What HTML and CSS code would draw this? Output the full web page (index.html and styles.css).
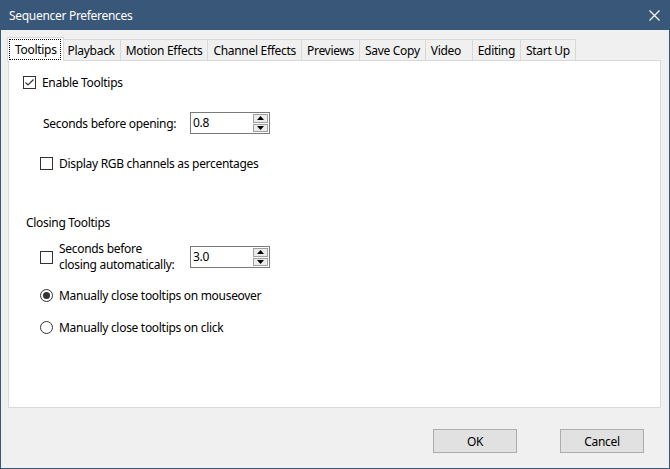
FILE: index.html
```html
<!DOCTYPE html>
<html lang="en">
<head>
  <meta charset="UTF-8" />
  <title>Sequencer Preferences</title>
  <link rel="stylesheet" href="styles.css">
</head>
<body>
  <div class="window">
    <div class="titlebar">
      <span class="title">Sequencer Preferences</span>
      <svg class="close" width="11" height="11" viewBox="0 0 11 11">
        <path d="M0.5 0.5 L10.5 10.5 M10.5 0.5 L0.5 10.5" stroke="#fff" stroke-width="1.1" fill="none"/>
      </svg>
    </div>

    <div class="tabs">
      <div class="tab active"><span class="focus">Tooltips</span></div>
      <div class="tab">Playback</div>
      <div class="tab">Motion Effects</div>
      <div class="tab">Channel Effects</div>
      <div class="tab">Previews</div>
      <div class="tab">Save Copy</div>
      <div class="tab">Video</div>
      <div class="tab">Editing</div>
      <div class="tab">Start Up</div>
    </div>

    <div class="panel">
      <div class="row row-enable">
        <span class="check checked">
          <svg width="11" height="11" viewBox="0 0 11 11"><path d="M1.5 5.5 L4 8 L9.5 2.5" stroke="#333" stroke-width="1.2" fill="none"/></svg>
        </span>
        <span class="label">Enable Tooltips</span>
      </div>

      <div class="row row-open">
        <span class="field-label">Seconds before opening:</span>
        <div class="spin">
          <span class="spin-value">0.8</span>
          <div class="spin-btns">
            <span class="spin-btn"><svg width="7" height="4" viewBox="0 0 7 4"><path d="M3.5 0 L7 4 L0 4 Z" fill="#000"/></svg></span>
            <span class="spin-btn"><svg width="7" height="4" viewBox="0 0 7 4"><path d="M0 0 L7 0 L3.5 4 Z" fill="#000"/></svg></span>
          </div>
        </div>
      </div>

      <div class="row row-rgb">
        <span class="check"></span>
        <span class="label">Display RGB channels as percentages</span>
      </div>

      <div class="section">Closing Tooltips</div>

      <div class="row row-close">
        <span class="check"></span>
        <span class="label two-line">Seconds before<br>closing automatically:</span>
        <div class="spin">
          <span class="spin-value">3.0</span>
          <div class="spin-btns">
            <span class="spin-btn"><svg width="7" height="4" viewBox="0 0 7 4"><path d="M3.5 0 L7 4 L0 4 Z" fill="#000"/></svg></span>
            <span class="spin-btn"><svg width="7" height="4" viewBox="0 0 7 4"><path d="M0 0 L7 0 L3.5 4 Z" fill="#000"/></svg></span>
          </div>
        </div>
      </div>

      <div class="row row-radio1">
        <span class="radio selected"></span>
        <span class="label">Manually close tooltips on mouseover</span>
      </div>

      <div class="row row-radio2">
        <span class="radio"></span>
        <span class="label">Manually close tooltips on click</span>
      </div>
    </div>

    <div class="footer">
      <button class="btn">OK</button>
      <button class="btn">Cancel</button>
    </div>
  </div>
</body>
</html>
```

FILE: styles.css
```css
body {
  margin: 0;
  padding: 0;
  font-family: 'Segoe UI', 'Noto Sans', sans-serif;
  font-size: 12px;
  letter-spacing: -0.3px;
  color: #000;
}

.window {
  width: 670px;
  height: 469px;
  box-sizing: border-box;
  border: 1px solid #395779;
  border-top: none;
  background: #f0f0f0;
  display: flex;
  flex-direction: column;
}

.titlebar {
  height: 30px;
  margin: 0 -1px;
  background: #395779;
  color: #fff;
  display: flex;
  align-items: center;
  justify-content: space-between;
  padding: 0 10px 0 9px;
  flex-shrink: 0;
}

.title {
  font-size: 12px;
  margin-top: 1px;
}

.tabs {
  display: flex;
  align-items: flex-end;
  margin: 7px 0 0 7px;
  position: relative;
  z-index: 1;
}

.tab {
  height: 21px;
  box-sizing: border-box;
  min-width: 48px;
  padding: 1px 5px 0 5px;
  border: 1px solid #d9d9d9;
  border-bottom: none;
  margin-left: -1px;
  background: #f0f0f0;
  display: flex;
  align-items: center;
  white-space: nowrap;
}

.tab:first-child {
  margin-left: 0;
}

.tab.active {
  height: 24px;
  margin: 0 -1px -1px -1px;
  padding: 0 3px 1px 2px;
  background: #fff;
  position: relative;
  z-index: 2;
}

.focus {
  outline: 1px dotted #000;
  padding: 1px 3px 1px 5px;
}

.panel {
  margin: 0 8px 0 7px;
  height: 348px;
  box-sizing: border-box;
  background: #fff;
  border: 1px solid #d9d9d9;
  padding-top: 13px;
}

.row {
  display: flex;
  align-items: center;
  height: 16px;
}

.check {
  width: 13px;
  height: 13px;
  box-sizing: border-box;
  border: 1px solid #333;
  background: #fff;
  display: flex;
  align-items: center;
  justify-content: center;
  flex-shrink: 0;
}

.radio {
  width: 13px;
  height: 13px;
  box-sizing: border-box;
  border: 1px solid #333;
  border-radius: 50%;
  background: #fff;
  display: flex;
  align-items: center;
  justify-content: center;
  flex-shrink: 0;
}

.radio.selected::after {
  content: "";
  width: 7px;
  height: 7px;
  border-radius: 50%;
  background: #333;
}

.label {
  margin-left: 6px;
  white-space: nowrap;
}

.two-line {
  line-height: 16px;
  width: 131px;
}

.row-enable {
  padding-left: 14px;
}

.row-open {
  height: 22px;
  margin-top: 22px;
  padding-left: 34px;
}

.field-label {
  width: 147px;
}

.row-rgb {
  margin-top: 21px;
  padding-left: 31px;
}

.section {
  margin-top: 44px;
  padding-left: 17px;
  height: 16px;
  line-height: 16px;
}

.row-close {
  height: 32px;
  margin-top: 10px;
  padding-left: 31px;
}

.row-radio1 {
  margin-top: 14px;
  padding-left: 31px;
}

.row-radio2 {
  margin-top: 16px;
  padding-left: 31px;
}

.spin {
  width: 80px;
  height: 22px;
  box-sizing: border-box;
  border: 1px solid #7a7a7a;
  display: flex;
  align-items: stretch;
  padding: 1px 1px 1px 2px;
}

.spin-value {
  flex: 1;
  line-height: 18px;
}

.spin-btns {
  width: 15px;
  display: flex;
  flex-direction: column;
  gap: 1px;
}

.spin-btn {
  flex: 1;
  background: #ececec;
  border: 1px solid #a0a0a0;
  display: flex;
  align-items: center;
  justify-content: center;
}

.footer {
  display: flex;
  justify-content: flex-end;
  gap: 43px;
  padding: 21px 25px 0 0;
}

.btn {
  width: 84px;
  height: 24px;
  background: #e1e1e1;
  border: 1px solid #adadad;
  font-family: inherit;
  font-size: 12px;
  letter-spacing: inherit;
  color: #000;
  padding: 0;
}
```
